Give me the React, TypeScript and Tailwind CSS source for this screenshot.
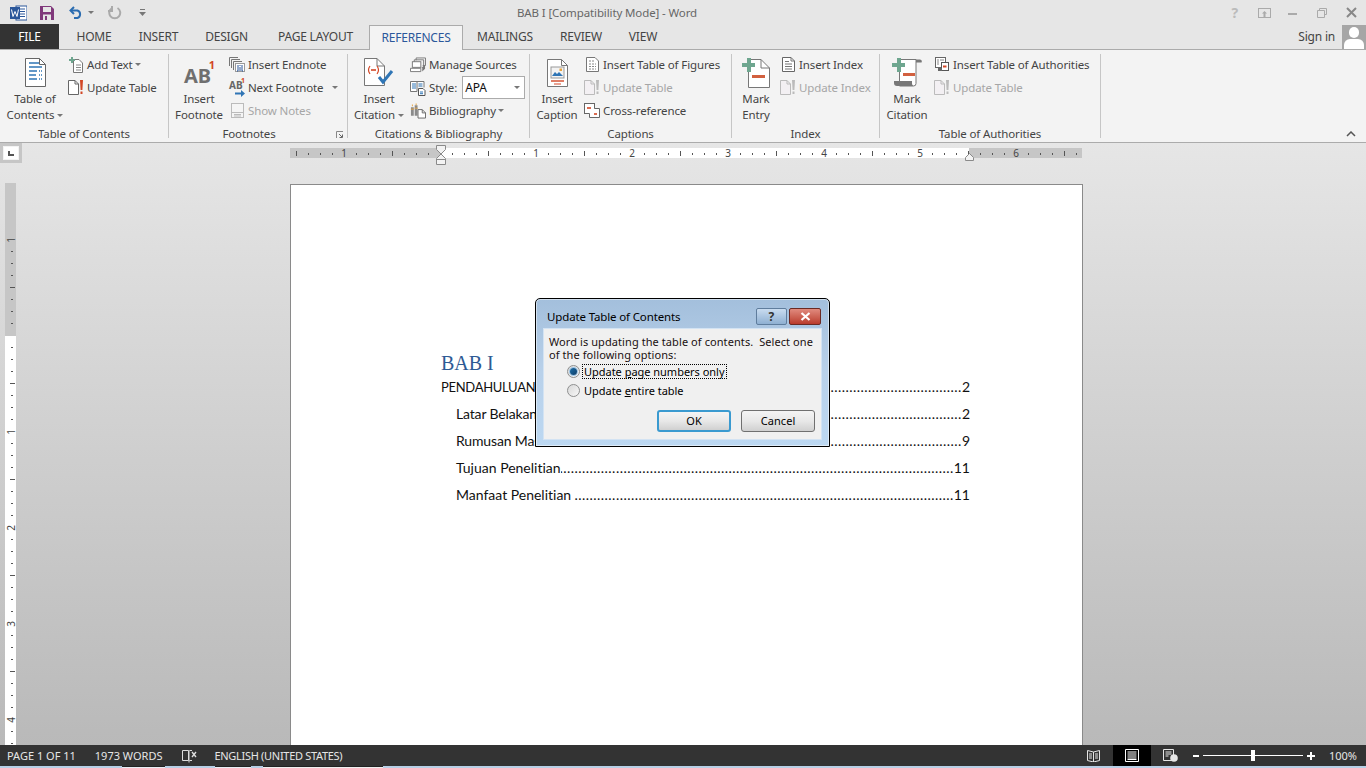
import type { ReactNode } from 'react';

const ui = "font-['Noto_Sans',sans-serif]";

const Arrow = ({ className = '' }: { className?: string }) => (
  <svg width="6" height="3" viewBox="0 0 6 3" className={`inline-block shrink-0 ${className}`}>
    <path d="M0 0h6L3 3z" fill="#777" />
  </svg>
);

const Page = ({ w, h, stroke = '#777', fill = '#fff', children }: { w: number; h: number; stroke?: string; fill?: string; children?: ReactNode }) => (
  <svg width={w} height={h} viewBox={`0 0 ${w} ${h}`} className="block">
    <path d={`M.5.5H${w - 6.5}L${w - 0.5} 6.5V${h - 0.5}H.5z`} fill={fill} stroke={stroke} />
    <path d={`M${w - 6.5}.5V6.5H${w - 0.5}`} fill="none" stroke={stroke} />
    {children}
  </svg>
);

const TocIcon = () => (
  <Page w={21} h={29} stroke="#666">
    <path d="M4 5h10M4 9h13M4 13h8M4 17h7M4 21h8" stroke="#2f75b5" strokeWidth="1.4" />
    <path d="M14 13h3M14 17h3M14 21h3" stroke="#2f75b5" strokeWidth="1.4" strokeDasharray="1 1" />
  </Page>
);

const AddTextIcon = () => (
  <svg width="15" height="16" viewBox="0 0 15 16" className="block">
    <path d="M4.5 2.5H10l3.5 3.5v9.5h-9z" fill="#fff" stroke="#777" />
    <path d="M7 8h5M7 10.5h5M7 13h5" stroke="#888" />
    <path d="M2 0h2v2h2v2H4v2H2V4H0V2h2z" fill="#6ea68f" />
  </svg>
);

const UpdateIcon = ({ off }: { off?: boolean }) => (
  <svg width="16" height="15" viewBox="0 0 16 15" className="block">
    <path d="M.5.5H7L10.5 4v10.5H.5z" fill={off ? '#f3f0f3' : '#fff'} stroke={off ? '#bbb' : '#666'} />
    <path d="M7 .5V4h3.5" fill="none" stroke={off ? '#bbb' : '#666'} />
    <path d="M12 0h3l-.6 10h-1.8zM12.5 11.5h2v2.5h-2z" fill={off ? '#bbb' : '#d24726'} />
  </svg>
);

const EndnoteIcon = () => (
  <svg width="16" height="15" viewBox="0 0 16 15" className="block">
    <path d="M.5 9V.5H9M2.5 11V2.5H11M4.5 13V4.5H13" fill="none" stroke="#777" />
    <rect x="6.5" y="6.5" width="9" height="8" fill="#fff" stroke="#999" />
    <path d="M9 8v6h-1M13 8v6h1M11 8v1M11 10v4" fill="none" stroke="#2b579a" />
  </svg>
);

const NextFootnoteIcon = () => (
  <div className="relative w-[16px] h-[16px] tracking-normal">
    <span className="absolute left-0 top-[-1px] text-[10px] leading-[12px] font-bold text-[#666]">AB</span>
    <span className="absolute left-[12px] top-[-3px] text-[7px] leading-[8px] font-bold text-[#d24726]">1</span>
    <svg width="10" height="7" viewBox="0 0 10 7" className="absolute left-[6px] top-[10px]">
      <path d="M0 2.5h6V0l4 3.5L6 7V4.5H0z" fill="#2f75b5" />
    </svg>
  </div>
);

const ShowNotesIcon = () => (
  <svg width="13" height="15" viewBox="0 0 13 15" className="block">
    <rect x=".5" y=".5" width="12" height="14" fill="#f5f5f5" stroke="#bbb" />
    <path d="M.5 9.5h12M3 11.5h7M3 13h7" stroke="#bbb" />
  </svg>
);

const CitationIcon = () => (
  <svg width="30" height="29" viewBox="0 0 30 29" className="block">
    <path d="M.5.5H13L20.5 8V27.5H.5z" fill="#fff" stroke="#777" />
    <path d="M13 .5V8h7.5" fill="none" stroke="#777" />
    <path d="M6 8Q3 12 6 16M13 8q3 4 0 8" fill="none" stroke="#d24726" strokeWidth="1.2" />
    <path d="M7 12h5" stroke="#d24726" strokeWidth="1.6" />
    <path d="M15 19l4 5 9-11" fill="none" stroke="#2f75b5" strokeWidth="3" />
  </svg>
);

const SourcesIcon = () => (
  <svg width="17" height="16" viewBox="0 0 17 16" className="block">
    <path d="M6.5 3V.5h10v8h-3M4.5 5V2.5h10v8h-2" fill="none" stroke="#777" />
    <rect x="2.5" y="4.5" width="9" height="6" fill="#fff" stroke="#777" />
    <path d="M.5 11.5h11v3.5H.5z" fill="#fff" stroke="#777" />
    <path d="M13 11l3-3v4l-3 3z" fill="#777" />
  </svg>
);

const StyleIcon = () => (
  <svg width="16" height="16" viewBox="0 0 16 16" className="block">
    <path d="M.5 1.5h6.5v10H.5zM7 1.5h7v6" fill="#fff" stroke="#777" />
    <path d="M2 4h4M2 6h4M2 8h4M8.5 4h4M8.5 6h4" stroke="#2f75b5" />
    <path d="M8.5 8.5h4.5l2 2v5H8.5z" fill="#fff" stroke="#555" />
    <path d="M10 12h3M10 13.7h3" stroke="#2f75b5" />
  </svg>
);

const BiblioIcon = () => (
  <svg width="17" height="16" viewBox="0 0 17 16" className="block">
    <path d="M1 4h3v9H1zM5 2h3v11H5z" fill="#8a8a8a" />
    <path d="M2 1h1v2H2zM6 0h1v2H6z" fill="#e8a33d" />
    <path d="M1 6h3M5 5h3" stroke="#e8a33d" />
    <path d="M8.5 6.5H13l3.5 3.5v5.5h-8z" fill="#fff" stroke="#666" />
    <path d="M13 6.5V10h3.5" fill="none" stroke="#666" />
  </svg>
);

const CaptionIcon = () => (
  <Page w={21} h={28} stroke="#777">
    <rect x="4" y="8" width="13" height="11" fill="#f3f3f3" stroke="#999" />
    <path d="M5 17l3-4 2 2 2-2 4 4z" fill="#2f75b5" />
    <rect x="12.5" y="9.5" width="2.5" height="2.5" fill="#e8a33d" />
    <path d="M4 22h13" stroke="#d24726" strokeWidth="1.4" />
    <path d="M7 25h7" stroke="#d24726" />
  </Page>
);

const TofIcon = () => (
  <svg width="13" height="15" viewBox="0 0 13 15" className="block">
    <path d="M.5.5H9L12.5 4v10.500H.5z" fill="#fff" stroke="#777" />
    <path d="M3 4h5M3 7h7M3 9.500h7M3 12h7" stroke="#888" strokeDasharray="2 1" />
  </svg>
);

const CrossRefIcon = () => (
  <svg width="16" height="15" viewBox="0 0 16 15" className="block">
    <rect x=".5" y=".5" width="10" height="10" fill="#fff" stroke="#666" />
    <path d="M10.500 5.500H15.500V14.500H5.500V10.500" fill="#fff" stroke="#666" />
    <path d="M3 5h4" stroke="#d24726" strokeWidth="1.6" />
    <path d="M10 11h3" stroke="#d24726" strokeWidth="1.6" />
  </svg>
);

const MarkEntryIcon = () => (
  <svg width="28" height="30" viewBox="0 0 28 30" className="block">
    <path d="M6.500 1.500H19l8.500 8.500v19.500h-21z" fill="#fff" stroke="#777" />
    <path d="M19 1.500V10h8.500" fill="none" stroke="#777" />
    <path d="M5 0h4v5h4v4H9v5H5V9H0V5h5z" fill="#6ea68f" />
    <rect x="10" y="17" width="13" height="3" fill="#d2603f" />
  </svg>
);

const MarkCitationIcon = () => (
  <svg width="30" height="30" viewBox="0 0 30 30" className="block">
    <path d="M7.500 1.500h16.500v24a2.500 2.500 0 0 1-2.500 2.500H7.500z" fill="#fff" stroke="#777" />
    <path d="M2 23h18v2.500a3 3 0 0 0 1.500 2.500H5a3 3 0 0 1-3-3z" fill="#777" />
    <path d="M24 1.500h3.500a2 2 0 0 1 2 3H24z" fill="#777" />
    <path d="M5 0h4v5h4v4H9v5H5V9H0V5h5z" fill="#6ea68f" />
    <rect x="11" y="15" width="12" height="3" fill="#d2603f" />
  </svg>
);

const IndexIcon = () => (
  <svg width="13" height="15" viewBox="0 0 13 15" className="block">
    <path d="M.5.5H9L12.500 4v10.500H.5z" fill="#fff" stroke="#666" />
    <path d="M9 .5V4h3.500M3 4.500h4M3 7h7M3 9.500h7M3 12h7" fill="none" stroke="#777" />
  </svg>
);

const AuthoritiesIcon = () => (
  <svg width="15" height="15" viewBox="0 0 15 15" className="block">
    <rect x=".5" y=".5" width="10" height="10" fill="#fff" stroke="#666" />
    <path d="M2 3h2M5 3h4M2 5h2M2 7h2" stroke="#888" />
    <rect x="6.500" y="5.500" width="7" height="8" fill="#fff" stroke="#555" />
    <path d="M8 9.500h3.500" stroke="#d24726" strokeWidth="2" />
    <rect x="3" y="11" width="4" height="3" fill="#666" />
  </svg>
);

const LargeBtn = ({ icon, lines, w, arrow, ml = '' }: { icon: ReactNode; lines: string[]; w: string; arrow?: boolean; ml?: string }) => (
  <div className={`flex flex-col items-center shrink-0 ${w} ${ml}`}>
    <div className="h-[37px] flex items-center justify-center">{icon}</div>
    <div className="text-center whitespace-nowrap leading-[16px]">
      <div>{lines[0]}</div>
      <div className="flex items-center justify-center gap-[3px]">
        {lines[1]}
        {arrow && <Arrow />}
      </div>
    </div>
  </div>
);

const SmallBtn = ({ icon, label, off, arrow }: { icon: ReactNode; label: string; off?: boolean; arrow?: boolean }) => (
  <div className={`h-[23px] -mt-px mb-px flex items-center whitespace-nowrap ${off ? 'text-[#a6a6a6]' : ''}`}>
    <div className="w-[19px] pr-[3px] shrink-0 flex justify-center">{icon}</div>
    {label}
    {arrow && <Arrow className="ml-[2px]" />}
  </div>
);

const Group = ({ w, label, labelClass = '', children, launcher }: { w: string; label: string; labelClass?: string; children: ReactNode; launcher?: boolean }) => (
  <div className={`relative shrink-0 h-[84px] border-r border-[#c6c6c6] ${w}`}>
    <div className="flex h-[72px]">{children}</div>
    <div className={`text-center leading-[16px] h-[12px] whitespace-nowrap ${labelClass}`}>{label}</div>
    {launcher && (
      <svg width="8" height="8" viewBox="0 0 8 8" className="absolute right-[3px] top-[77px]">
        <path d="M.5 7V.5H7" fill="none" stroke="#888" />
        <path d="M3 3l3 3M6.500 3.500v3h-3" fill="none" stroke="#666" />
      </svg>
    )}
  </div>
);

const tabs = [
  { label: 'HOME', w: 'w-[64px]' },
  { label: 'INSERT', w: 'w-[65px]' },
  { label: 'DESIGN', w: 'w-[71px]' },
  { label: 'PAGE LAYOUT', w: 'w-[107px]' },
];

const tabsAfter = [
  { label: 'MAILINGS', w: 'w-[84px]' },
  { label: 'REVIEW', w: 'w-[68px]' },
  { label: 'VIEW', w: 'w-[56px]' },
];

const TitleBar = () => (
  <div className="h-[25px] flex items-center relative shrink-0">
    <svg width="17" height="16" viewBox="0 0 17 16" className="ml-[10px]">
      <rect x="6" y="1" width="11" height="14" fill="#fff" stroke="#2b579a" />
      <path d="M9 4h6M9 6.500h6M9 9h6M9 11.500h6" stroke="#2b579a" />
      <rect x="0" y="2" width="10" height="12" fill="#2b579a" />
      <path d="M1.500 4.500l1.500 7 2-5 2 5 1.500-7" fill="none" stroke="#fff" />
    </svg>
    <svg width="14" height="14" viewBox="0 0 14 14" className="ml-[13px]">
      <path d="M0 0h11l3 3v11H0z" fill="#80397b" />
      <rect x="3" y="1" width="8" height="5" fill="#e6e6e6" />
      <rect x="3" y="8.500" width="8" height="5.500" fill="#e6e6e6" />
      <rect x="5" y="10" width="2" height="4" fill="#80397b" />
    </svg>
    <svg width="15" height="13" viewBox="0 0 15 13" className="ml-[15px]">
      <path d="M5 1L1.500 4.500 5 8" fill="none" stroke="#2b6cb0" strokeWidth="2" />
      <path d="M2 4.500h6.500a4 4 0 0 1 0 7.500H5" fill="none" stroke="#2b6cb0" strokeWidth="2" />
    </svg>
    <Arrow className="ml-[4px]" />
    <svg width="14" height="14" viewBox="0 0 14 14" className="ml-[14px]">
      <path d="M9.500 2A5.500 5.500 0 1 1 4 2" fill="none" stroke="#aaa" strokeWidth="2" />
      <path d="M4 0v5H0" fill="none" stroke="#aaa" strokeWidth="2" />
    </svg>
    <svg width="7" height="7" viewBox="0 0 7 7" className="ml-[17px]">
      <path d="M1 0h5v1H1zM0 3h7L3.500 7z" fill="#777" />
    </svg>
    <div className="absolute left-[517px] top-[5px] text-[#666] leading-[16px] whitespace-nowrap">BAB I [Compatibility Mode] - Word</div>
    <div className="ml-auto flex items-center pr-[9px]">
      <span className="text-[14px] leading-[14px] font-bold text-[#bbb] mr-[20px]">?</span>
      <svg width="13" height="10" viewBox="0 0 13 10" className="mr-[17px]">
        <rect x=".5" y=".5" width="12" height="9" fill="none" stroke="#aaa" />
        <path d="M6.500 3l-2.500 2.500h1.500V9h2V5.500H9z" fill="#aaa" />
      </svg>
      <div className="w-[9px] h-[2px] bg-[#aaa] mr-[20px] mt-[3px]" />
      <svg width="10" height="10" viewBox="0 0 10 10" className="mr-[19px]">
        <path d="M2.500 2.500V.5h7v6h-2M.5 2.500h7v7h-7z" fill="none" stroke="#aaa" />
      </svg>
      <svg width="11" height="11" viewBox="0 0 11 11">
        <path d="M1 1l9 9M10 1l-9 9" stroke="#888" strokeWidth="2" />
      </svg>
    </div>
  </div>
);

const TabsRow = () => (
  <div className="h-[25px] flex items-end relative shrink-0 border-b border-[#ababab] text-[12px] tracking-[-0.2px]">
    <div className="w-[59px] h-[25px] bg-[#333] text-white flex items-center justify-center">FILE</div>
    <div className="w-[3px]" />
    {tabs.map((t) => (
      <div key={t.label} className={`${t.w} h-[25px] flex items-center justify-center whitespace-nowrap`}>{t.label}</div>
    ))}
    <div className="w-[94px] h-[25px] -mb-px bg-[#f3f3f3] border border-b-0 border-[#ababab] text-[#2b579a] flex items-center justify-center relative z-10">REFERENCES</div>
    {tabsAfter.map((t) => (
      <div key={t.label} className={`${t.w} h-[25px] flex items-center justify-center whitespace-nowrap`}>{t.label}</div>
    ))}
    <div className="ml-auto flex items-center h-[25px] text-[#444]">
      <span className="mr-[7px]">Sign in</span>
      <div className="w-[24px] h-[24px] bg-[#a6a6a6] relative overflow-hidden">
        <div className="absolute left-[7px] top-[2px] w-[10px] h-[11px] rounded-full bg-white" />
        <div className="absolute left-[2px] top-[14px] w-[20px] h-[14px] rounded-t-[6px] bg-white" />
      </div>
    </div>
  </div>
);

const Ribbon = () => (
  <div className="h-[93px] bg-[#f3f3f3] border-b border-[#ababab] pt-[4px] flex relative shrink-0">
    <Group w="w-[169px]" label="Table of Contents">
      <LargeBtn icon={<TocIcon />} lines={['Table of', 'Contents']} arrow w="w-[60px]" ml="ml-[5px]" />
      <div className="ml-[3px]">
        <SmallBtn icon={<AddTextIcon />} label="Add Text" arrow />
        <SmallBtn icon={<UpdateIcon />} label="Update Table" />
      </div>
    </Group>
    <Group w="w-[179px]" label="Footnotes" labelClass="pr-[18px]" launcher>
      <LargeBtn
        icon={
          <div className="relative w-[30px] h-[24px] mt-[4px] tracking-normal">
            <span className="absolute left-0 top-[2px] text-[20px] leading-[22px] font-bold text-[#6f6f6f]">AB</span>
            <span className="absolute right-[-1px] top-[-4px] text-[11px] leading-[12px] font-bold text-[#d24726]">1</span>
          </div>
        }
        lines={['Insert', 'Footnote']}
        w="w-[60px]"
      />
      <div>
        <SmallBtn icon={<EndnoteIcon />} label="Insert Endnote" />
        <div className="h-[23px] -mt-px mb-px flex items-center whitespace-nowrap">
          <div className="w-[19px] shrink-0"><NextFootnoteIcon /></div>
          Next Footnote
          <Arrow className="ml-[9px]" />
        </div>
        <SmallBtn icon={<ShowNotesIcon />} label="Show Notes" off />
      </div>
    </Group>
    <Group w="w-[182px]" label="Citations & Bibliography">
      <LargeBtn icon={<CitationIcon />} lines={['Insert', 'Citation']} arrow w="w-[60px]" ml="ml-[1px]" />
      <div className="ml-[1px]">
        <SmallBtn icon={<SourcesIcon />} label="Manage Sources" />
        <div className="h-[23px] -mt-px mb-px flex items-center whitespace-nowrap">
          <div className="w-[19px] shrink-0"><StyleIcon /></div>
          Style:
          <div className="ml-[5px] w-[63px] h-[23px] border border-[#ababab] bg-white flex items-center justify-between pl-[2px] pr-[4px] text-[#111] text-[12px]">
            APA
            <Arrow />
          </div>
        </div>
        <SmallBtn icon={<BiblioIcon />} label="Bibliography" arrow />
      </div>
    </Group>
    <Group w="w-[202px]" label="Captions">
      <LargeBtn icon={<CaptionIcon />} lines={['Insert', 'Caption']} w="w-[54px]" />
      <div>
        <SmallBtn icon={<TofIcon />} label="Insert Table of Figures" />
        <SmallBtn icon={<UpdateIcon off />} label="Update Table" off />
        <SmallBtn icon={<CrossRefIcon />} label="Cross-reference" />
      </div>
    </Group>
    <Group w="w-[148px]" label="Index">
      <LargeBtn icon={<MarkEntryIcon />} lines={['Mark', 'Entry']} w="w-[48px]" />
      <div>
        <SmallBtn icon={<IndexIcon />} label="Insert Index" />
        <SmallBtn icon={<UpdateIcon off />} label="Update Index" off />
      </div>
    </Group>
    <Group w="w-[221px]" label="Table of Authorities">
      <LargeBtn icon={<MarkCitationIcon />} lines={['Mark', 'Citation']} w="w-[54px]" />
      <div>
        <SmallBtn icon={<AuthoritiesIcon />} label="Insert Table of Authorities" />
        <SmallBtn icon={<UpdateIcon off />} label="Update Table" off />
      </div>
    </Group>
    <svg width="10" height="6" viewBox="0 0 10 6" className="absolute right-[10px] bottom-[5px]">
      <path d="M1 5l4-4 4 4" fill="none" stroke="#555" strokeWidth="1.5" />
    </svg>
  </div>
);

const HRuler = () => {
  const ticks = [];
  for (let x = 296; x <= 1076; x += 12) {
    const k = (x - 440 + 960) / 12;
    if (k % 8 === 0) continue;
    const long = k % 4 === 0;
    ticks.push(<rect key={x} x={x - 290} y={long ? 6 : 8} width="1" height={long ? 5 : 2} fill="#555" />);
  }
  const labels: [number, string][] = [[344, '1'], [536, '1'], [632, '2'], [728, '3'], [824, '4'], [920, '5'], [1016, '6']];
  return (
    <svg width="800" height="24" viewBox="0 0 800 24" className="block">
      <rect x="0" y="3" width="150" height="10" fill="#c6c6c6" />
      <rect x="150" y="3" width="529" height="10" fill="#fff" />
      <rect x="679" y="3" width="113" height="10" fill="#c6c6c6" />
      {ticks}
      {labels.map(([x, s], i) => (
        <text key={i} x={x - 290} y="12" textAnchor="middle" fontSize="10" fill="#444" fontFamily="'Noto Sans', sans-serif">{s}</text>
      ))}
      <path d="M146.500.5h9v4L151 9l-4.500-4.500z" fill="#f3f3f3" stroke="#8a8a8a" />
      <path d="M146.500 13.500L151 9l4.500 4.500v6h-9z" fill="#f3f3f3" stroke="#8a8a8a" />
      <path d="M146.500 14.500h9" stroke="#8a8a8a" />
      <path d="M675.500 15.500v-3L679.500 8.500l4 4v3z" fill="#f3f3f3" stroke="#8a8a8a" />
    </svg>
  );
};

const VRuler = () => {
  const ticks = [];
  for (let y = 251; y <= 745; y += 12) {
    const k = (y - 335 + 480) / 12;
    if (k % 8 === 0) continue;
    const long = k % 4 === 0;
    ticks.push(<rect key={y} x={long ? 5 : 6} y={y - 183} width={long ? 5 : 2} height="1" fill="#555" />);
  }
  const labels: [number, string][] = [[240, '1'], [432, '1'], [528, '2'], [624, '3'], [720, '4']];
  return (
    <svg width="12" height="562" viewBox="0 0 12 562" className="block shrink-0">
      <rect x="0" y="0" width="11" height="153" fill="#c6c6c6" />
      <rect x="0" y="153" width="11" height="409" fill="#fff" />
      {ticks}
      {labels.map(([y, s], i) => (
        <text key={i} transform={`translate(10 ${y - 183}) rotate(-90)`} textAnchor="middle" fontSize="10" fill="#444" fontFamily="'Noto Sans', sans-serif">{s}</text>
      ))}
    </svg>
  );
};

const dots = '.'.repeat(220);

const TocRow = ({ label, page, indent, labelClass = '' }: { label: string; page: string; indent?: boolean; labelClass?: string }) => (
  <div className={`h-[27px] flex items-center whitespace-nowrap ${indent ? 'pl-[15px]' : ''}`}>
    <span className={`shrink-0 ${labelClass}`}>{label}</span>
    <span className="flex-1 min-w-0 overflow-hidden flex justify-end tracking-[0.45px]"><span className="shrink-0">{dots}</span></span>
    <span className="shrink-0">{page}</span>
  </div>
);

const Radio = ({ on }: { on?: boolean }) => (
  <div className="w-[13px] h-[13px] rounded-full border border-[#8e8f8f] bg-gradient-to-br from-[#d8d8d8] to-[#f8f8f8] flex items-center justify-center shrink-0">
    {on && <div className="w-[7px] h-[7px] rounded-full bg-gradient-to-br from-[#1c6ea8] to-[#0f3f6a] ring-1 ring-[#9cc4e4]" />}
  </div>
);

const Dialog = () => (
  <div className="absolute left-[535px] top-[155px] w-[295px] h-[149px] rounded-t-[5px] border border-black bg-gradient-to-b from-[#a3bfdc] via-[#b9d1ea] to-[#bcd8f2] shadow-[inset_0_0_0_1px_rgba(255,255,255,0.5)] text-black font-['Noto_Sans',sans-serif] text-[11px] tracking-[0.08px]">
    <div className="h-[29px] flex items-center pl-[11px] relative">
      <span className="text-[11.5px] tracking-[-0.14px] leading-[16px] mt-[7px]">Update Table of Contents</span>
      <div className="absolute left-[220px] top-[9px] w-[31px] h-[17px] rounded-[2px] border border-[#5f7d9d] bg-gradient-to-b from-[#c9dcf0] to-[#8fb0d2] flex items-center justify-center text-[12px] font-bold text-[#333]">?</div>
      <div className="absolute left-[253px] top-[9px] w-[32px] h-[17px] rounded-[2px] border border-[#6b2a24] bg-gradient-to-b from-[#e08a7e] to-[#b93a2c] flex items-center justify-center">
        <svg width="11" height="9" viewBox="0 0 11 9">
          <path d="M1.500 1l8 7M9.500 1l-8 7" stroke="#fff" strokeWidth="2.200" />
        </svg>
      </div>
    </div>
    <div className="mx-[7px] h-[112px] bg-[#f0f0f0] border border-[#d3e3f3] px-[5px] pt-[6px]">
      <p className="leading-[13px] text-[#1a1010] whitespace-pre">{'Word is updating the table of contents.  Select one\nof the following options:'}</p>
      <div className="flex items-center h-[15px] mt-[3px] ml-[18px]">
        <Radio on />
        <span className="ml-[2px] leading-[13px] px-px border border-dotted border-black tracking-[-0.02px]">Update <u>p</u>age numbers only</span>
      </div>
      <div className="flex items-center h-[15px] mt-[4px] ml-[18px]">
        <Radio />
        <span className="ml-[3px] leading-[13px] px-px tracking-[-0.02px]">Update <u>e</u>ntire table</span>
      </div>
      <div className="flex justify-end gap-[10px] mt-[12px] pr-[1px]">
        <div className="w-[74px] h-[22px] rounded-[3px] border-2 border-[#3a9ad0] bg-gradient-to-b from-[#f4f4f4] via-[#e8e8e8] to-[#d0d0d0] flex items-center justify-center">OK</div>
        <div className="w-[74px] h-[22px] rounded-[3px] border border-[#707070] bg-gradient-to-b from-[#f4f4f4] via-[#e8e8e8] to-[#d0d0d0] flex items-center justify-center">Cancel</div>
      </div>
    </div>
  </div>
);

const StatusBar = () => (
  <div className="h-[21px] bg-[#333] text-[#e6e6e6] flex items-center shrink-0 text-[11px] tracking-normal">
    <span className="ml-[7px] whitespace-nowrap">PAGE 1 OF 11</span>
    <span className="ml-[19px] whitespace-nowrap">1973 WORDS</span>
    <svg width="15" height="14" viewBox="0 0 15 14" className="ml-[20px]">
      <path d="M.5 1.500h6v10h-6zM7 1.500v12M7.500 1.500H10M7.500 11.500H10" fill="none" stroke="#ddd" />
      <path d="M10 3l4 5M14 3l-4 5" stroke="#ddd" strokeWidth="1.400" />
    </svg>
    <span className="ml-[17px] whitespace-nowrap tracking-[-0.3px]">ENGLISH (UNITED STATES)</span>
    <div className="ml-auto flex items-center h-full">
      <svg width="13" height="13" viewBox="0 0 13 13">
        <path d="M.5 1.500l6 1.500 6-1.500v10l-6 1.500-6-1.500zM6.500 3v10M2 5h3M2 7h3M2 9h3M8 5h3M8 7h3M8 9h3" fill="none" stroke="#e6e6e6" />
      </svg>
      <div className="w-[38px] h-[21px] bg-black ml-[13px] flex items-center justify-center">
        <svg width="14" height="13" viewBox="0 0 14 13">
          <path d="M.5.500h13v12H.5zM2.500 3h9M2.500 5h9M2.500 7h9M2.500 9h9M2.500 10.500h9" fill="none" stroke="#fff" />
        </svg>
      </div>
      <svg width="15" height="13" viewBox="0 0 15 13" className="ml-[12px]">
        <path d="M.5.500h10v11H.5zM2.500 3h6M2.500 5h6M2.500 7h3" fill="none" stroke="#e6e6e6" />
        <circle cx="11" cy="9" r="3.800" fill="#e6e6e6" />
      </svg>
      <div className="w-[6px] h-[2px] bg-white ml-[15px]" />
      <div className="relative w-[100px] h-px bg-white ml-[4px]">
        <div className="absolute left-[48px] top-[-5px] w-[4px] h-[11px] bg-white" />
      </div>
      <svg width="8" height="8" viewBox="0 0 8 8" className="ml-[4px]">
        <path d="M3 0h2v3h3v2H5v3H3V5H0V3h3z" fill="#fff" />
      </svg>
      <span className="ml-[14px] mr-[9px]">100%</span>
    </div>
  </div>
);

export default function App() {
  return (
    <div className={`h-screen w-full overflow-hidden flex flex-col bg-[#e6e6e6] text-[#444] text-[11.5px] tracking-[-0.12px] leading-[16px] ${ui}`}>
      <TitleBar />
      <TabsRow />
      <Ribbon />
      <div className="relative flex-1 min-h-0 overflow-hidden flex flex-col bg-gradient-to-b from-[#e6e6e6] to-[#b9b9b9]">
        <div className="h-[40px] flex shrink-0 relative">
          <div className="w-[22px] h-[20px] bg-[#c6c6c6] flex items-center justify-center">
            <div className="w-[16px] h-[14px] bg-white border border-[#f3f3f3] flex items-center justify-center">
              <div className="w-[6px] h-[5px] border-l-2 border-b-2 border-[#555]" />
            </div>
          </div>
          <div className="ml-[268px] mt-[2px]"><HRuler /></div>
        </div>
        <div className="flex flex-1 min-h-0">
          <div className="ml-[5px]"><VRuler /></div>
          <div className="ml-[273px] w-[793px] mt-px border border-b-0 border-[#8a8a8a] bg-white pt-[166px] pl-[150px] pr-[112px] text-[#111] font-['Lato',sans-serif] text-[14px] tracking-normal [font-variant-ligatures:none]">
            <h1 className="font-['Liberation_Serif',serif] text-[20px] leading-[24px] -mb-[2px] text-[#2e5a94]">BAB I</h1>
            <TocRow label="PENDAHULUAN" page="2" labelClass="text-[13px] tracking-[-0.3px]" />
            <TocRow label="Latar Belakang" page="2" indent labelClass="tracking-[-0.15px]" />
            <TocRow label="Rumusan Masalah" page="9" indent labelClass="tracking-[-0.15px]" />
            <TocRow label="Tujuan Penelitian" page="11" indent />
            <TocRow label="Manfaat Penelitian" page="11" indent labelClass="mr-[3px]" />
          </div>
        </div>
        <Dialog />
      </div>
      <StatusBar />
      <div className="h-[2px] bg-[#b8cfe6] shrink-0 flex">
        <div className="ml-[122px] w-[43px] bg-[#e8eef5] border-t border-[#222]" />
        <div className="ml-[50px] w-[36px] bg-[#e8eef5] border-t border-[#222]" />
        <div className="ml-[12px] w-[120px] bg-[#f0f0f0] border-t border-[#222]" />
      </div>
    </div>
  );
}
